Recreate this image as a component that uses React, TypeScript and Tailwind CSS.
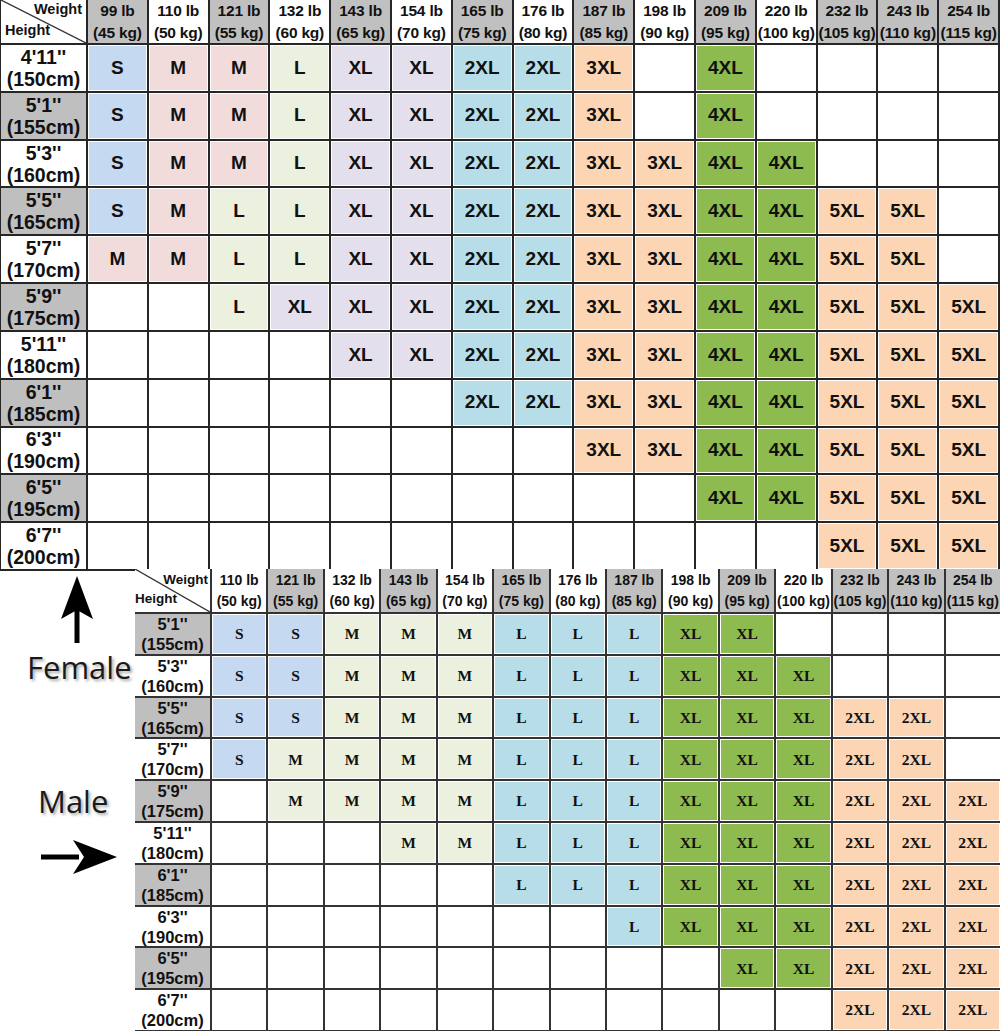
import React from 'react';

const TOP_W: [string, string, boolean][] = [
  ['99', '45', true], ['110', '50', false], ['121', '55', true], ['132', '60', false],
  ['143', '65', true], ['154', '70', false], ['165', '75', true], ['176', '80', false],
  ['187', '85', true], ['198', '90', false], ['209', '95', true], ['220', '100', false],
  ['232', '105', true], ['243', '110', true], ['254', '115', true],
];

const BOT_W: [string, string, boolean][] = [
  ['110', '50', false], ['121', '55', true], ['132', '60', false],
  ['143', '65', true], ['154', '70', false], ['165', '75', true], ['176', '80', false],
  ['187', '85', true], ['198', '90', false], ['209', '95', true], ['220', '100', false],
  ['232', '105', true], ['243', '110', true], ['254', '115', true],
];

const TOP_ROWS: [string, string, boolean, string][] = [
  ["4'11''", '(150cm)', false, 'S M M L XL XL 2XL 2XL 3XL - 4XL - - - -'],
  ["5'1''", '(155cm)', true, 'S M M L XL XL 2XL 2XL 3XL - 4XL - - - -'],
  ["5'3''", '(160cm)', false, 'S M M L XL XL 2XL 2XL 3XL 3XL 4XL 4XL - - -'],
  ["5'5''", '(165cm)', true, 'S M L L XL XL 2XL 2XL 3XL 3XL 4XL 4XL 5XL 5XL -'],
  ["5'7''", '(170cm)', false, 'M M L L XL XL 2XL 2XL 3XL 3XL 4XL 4XL 5XL 5XL -'],
  ["5'9''", '(175cm)', true, '- - L XL XL XL 2XL 2XL 3XL 3XL 4XL 4XL 5XL 5XL 5XL'],
  ["5'11''", '(180cm)', false, '- - - - XL XL 2XL 2XL 3XL 3XL 4XL 4XL 5XL 5XL 5XL'],
  ["6'1''", '(185cm)', true, '- - - - - - 2XL 2XL 3XL 3XL 4XL 4XL 5XL 5XL 5XL'],
  ["6'3''", '(190cm)', false, '- - - - - - - - 3XL 3XL 4XL 4XL 5XL 5XL 5XL'],
  ["6'5''", '(195cm)', true, '- - - - - - - - - - 4XL 4XL 5XL 5XL 5XL'],
  ["6'7''", '(200cm)', false, '- - - - - - - - - - - - 5XL 5XL 5XL'],
];

const BOT_ROWS: [string, string, boolean, string][] = [
  ["5'1''", '(155cm)', true, 'S S M M M L L L XL XL - - - -'],
  ["5'3''", '(160cm)', false, 'S S M M M L L L XL XL XL - - -'],
  ["5'5''", '(165cm)', true, 'S S M M M L L L XL XL XL 2XL 2XL -'],
  ["5'7''", '(170cm)', false, 'S M M M M L L L XL XL XL 2XL 2XL -'],
  ["5'9''", '(175cm)', true, '- M M M M L L L XL XL XL 2XL 2XL 2XL'],
  ["5'11''", '(180cm)', false, '- - - M M L L L XL XL XL 2XL 2XL 2XL'],
  ["6'1''", '(185cm)', true, '- - - - - L L L XL XL XL 2XL 2XL 2XL'],
  ["6'3''", '(190cm)', false, '- - - - - - - L XL XL XL 2XL 2XL 2XL'],
  ["6'5''", '(195cm)', true, '- - - - - - - - - XL XL 2XL 2XL 2XL'],
  ["6'7''", '(200cm)', false, '- - - - - - - - - - - 2XL 2XL 2XL'],
];

const TOP_COLORS: Record<string, string> = {
  S: 'bg-[#c5d9f1]',
  M: 'bg-[#f2dcdb]',
  L: 'bg-[#ebf1de]',
  XL: 'bg-[#e4dfec]',
  '2XL': 'bg-[#b7dee8]',
  '3XL': 'bg-[#fcd5b4]',
  '4XL': 'bg-[#8dbb4f]',
  '5XL': 'bg-[#fcd5b4]',
};

const BOT_COLORS: Record<string, string> = {
  S: 'bg-[#c5d9f1]',
  M: 'bg-[#ebf1de]',
  L: 'bg-[#b7dee8]',
  XL: 'bg-[#8dbb4f]',
  '2XL': 'bg-[#fcd5b4]',
};

function Diagonal() {
  return (
    <svg className="absolute inset-0 h-full w-full" viewBox="0 0 100 100" preserveAspectRatio="none">
      <line x1="0" y1="0" x2="100" y2="100" stroke="#333" strokeWidth="1.3" vectorEffect="non-scaling-stroke" />
    </svg>
  );
}

function TopTable() {
  return (
    <div className="grid h-[571px] w-[1000px] grid-cols-[85px_repeat(15,minmax(0,1fr))] grid-rows-[43px_repeat(11,minmax(0,1fr))] gap-[2px] bg-[#262626] pb-[2px] pl-[1px] pr-[2px] font-['Liberation_Sans',Arial,sans-serif] font-bold text-[#111]">
      <div className="relative flex flex-col justify-between bg-white px-[4px] pb-[4px] pt-[1px] text-[14.5px] leading-[17px]">
        <Diagonal />
        <span className="self-end">Weight</span>
        <span className="self-start">Height</span>
      </div>
      {TOP_W.map(([lb, kg, grey]) => (
        <div
          key={lb}
          className={`flex flex-col items-center justify-center whitespace-nowrap text-[15.5px] leading-[22px] tracking-[-0.2px] ${grey ? 'bg-[#c0c0c0]' : 'bg-white'}`}
        >
          <span>{lb} lb</span>
          <span>({kg} kg)</span>
        </div>
      ))}
      {TOP_ROWS.map(([ft, cm, grey, sizes]) => (
        <React.Fragment key={ft}>
          <div
            className={`flex flex-col items-center justify-center whitespace-nowrap text-[19.5px] leading-[22px] ${grey ? 'bg-[#bfbfbf]' : 'bg-white'}`}
          >
            <span>{ft}</span>
            <span>{cm}</span>
          </div>
          {sizes.split(' ').map((s, i) =>
            s === '-' ? (
              <div key={i} className="bg-white" />
            ) : (
              <div
                key={i}
                className={`flex items-center justify-center text-[19px] shadow-[inset_0_0_0_1px_#ffffff] ${TOP_COLORS[s]}`}
              >
                {s}
              </div>
            ),
          )}
        </React.Fragment>
      ))}
    </div>
  );
}

function BottomTable() {
  return (
    <div className="grid h-[462px] w-[865px] shrink-0 grid-cols-[75px_repeat(14,minmax(0,1fr))] grid-rows-[43px_repeat(10,minmax(0,1fr))] gap-[2px] bg-[#333333] pb-[1px] font-['Liberation_Sans',Arial,sans-serif] font-bold text-[#111]">
      <div className="relative flex flex-col justify-between bg-white pb-[5px] pr-[2px] pt-[3px] text-[13.5px] leading-[16px]">
        <Diagonal />
        <span className="self-end">Weight</span>
        <span className="self-start">Height</span>
      </div>
      {BOT_W.map(([lb, kg, grey]) => (
        <div
          key={lb}
          className={`flex flex-col items-center justify-center whitespace-nowrap text-[14px] leading-[21px] ${grey ? 'bg-[#c0c0c0]' : 'bg-white'}`}
        >
          <span>{lb} lb</span>
          <span>({kg} kg)</span>
        </div>
      ))}
      {BOT_ROWS.map(([ft, cm, grey, sizes]) => (
        <React.Fragment key={ft}>
          <div
            className={`flex flex-col items-center justify-center whitespace-nowrap text-[16.5px] leading-[20px] ${grey ? 'bg-[#bfbfbf]' : 'bg-white'}`}
          >
            <span>{ft}</span>
            <span>{cm}</span>
          </div>
          {sizes.split(' ').map((s, i) =>
            s === '-' ? (
              <div key={i} className="bg-white" />
            ) : (
              <div
                key={i}
                className={`flex items-center justify-center font-['Liberation_Serif','Times_New_Roman',serif] text-[15.5px] shadow-[inset_0_0_0_1px_#ffffff] ${BOT_COLORS[s]}`}
              >
                {s}
              </div>
            ),
          )}
        </React.Fragment>
      ))}
    </div>
  );
}

function Labels() {
  return (
    <div className="flex w-[135px] shrink-0 flex-col font-['Open_Sans','Noto_Sans',sans-serif] text-[31px] leading-[36px] text-[#1a1a1a]">
      <svg width="135" height="76" viewBox="0 0 135 76" className="block">
        <polygon points="77,7 93,50 77,41 61,50" fill="#000" />
        <rect x="74.5" y="40" width="5" height="34" fill="#000" />
      </svg>
      <div className="mt-[4px] pl-[27px] [text-shadow:2px_2px_3px_rgba(0,0,0,0.35)]">Female</div>
      <div className="mt-[98px] pl-[38px] [text-shadow:2px_2px_3px_rgba(0,0,0,0.35)]">Male</div>
      <svg width="135" height="76" viewBox="0 0 135 76" className="block">
        <rect x="41" y="35.5" width="38" height="5" fill="#000" />
        <polygon points="117,38 73,21 84,38 73,55" fill="#000" />
      </svg>
    </div>
  );
}

export default function App() {
  return (
    <div className="h-[1031px] w-[1000px] overflow-hidden bg-white">
      <TopTable />
      <div className="-mt-[2px] flex">
        <Labels />
        <BottomTable />
      </div>
    </div>
  );
}
